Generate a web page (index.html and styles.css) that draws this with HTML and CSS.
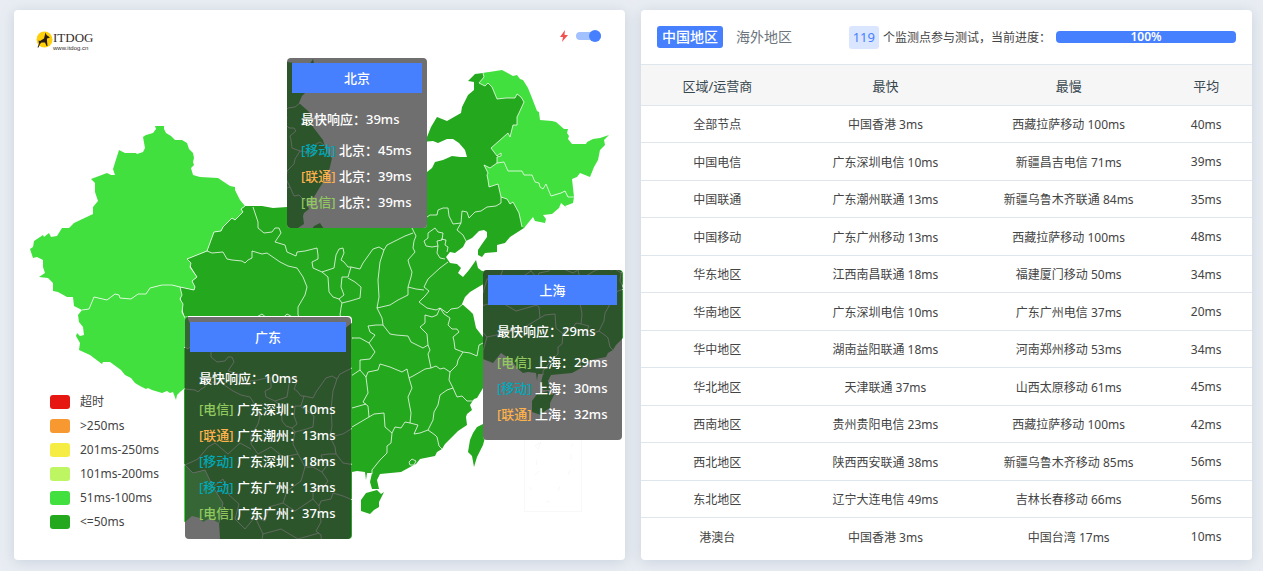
FILE: index.html
```html
<!DOCTYPE html>
<html lang="zh-CN">
<head>
    <meta charset="UTF-8">
    <meta name="viewport" content="width=device-width, initial-scale=1.0">
    <title>ITDOG</title>
    <link rel="stylesheet" href="styles.css">
</head>
<body>
    <main class="page">
        <section class="card map-card">
            <svg class="map" viewBox="14 10 611 550">
                <g id="china">
                    <!-- mainland -->
                    <path class="fast" d="M245 206L253 206L262 206L273 208L287 207L320 210L350 212L385 205L410 185L427 172L432 168L435 162L443 160L452 156L460 157L467 157L465 150L459 143L453 139L447 139L438 143L433 141L422 142L427 137L431 127L437 117L447 121L461 113L462 107L468 95L474 90L474 82L468 81L475 74L483 73L502 72L526 90L538 122L560 150L560 185L545 205L530 214L524 228L510 237L505 243L497 245L497 252L485 253L482 257L478 255L478 250L482 244L487 237L487 232L484 230L479 231L472 238L466 241L463 247L455 253L450 252L446 257L450 263L457 264L461 268L458 273L463 277L469 270L474 263L476 260L478 268L482 271L495 272L497 278L487 282L480 286L470 292L465 297L462 304L470 311L473 314L476 328L486 341L490 354L495 359L493 368L490 378L483 388L477 398L474 399L470 405L472 410L467 414L466 417L467 425L458 431L445 444L442 449L437 452L435 456L420 459L416 464L412 466L401 472L380 474L377 480L379 489L372 489L370 482L372 473L367 473L366 480L365 472L357 471L352 472L347 468L340 459L330 452L322 462L312 458L300 462L290 470L280 460L268 445L262 425L267 409L266 394L270 374L260 358L252 341L240 344L232 336L210 330L195 325L185 318L183 312L181 303L180 287L194 290L195 287L192 281L197 277L191 267L187 259L207 251L214 232L221 231L223 227L232 218L235 220L243 212L241 209Z"/>
                    <!-- Hainan, Taiwan -->
                    <path class="fast" d="M377 490L381 494L384 492L379 502L379 507L374 510L370 514L361 511L361 500L366 493Z"/>
                    <path class="fast" d="M483 424L477 427L473 433L470 440L468 452L472 456L474 467L477 457L483 445L487 430Z"/>
                    <!-- Xinjiang -->
                    <path class="mid" d="M91 179L107 173L111 175L115 175L113 169L119 150L125 153L136 153L137 154L143 152L145 148L143 137L146 135L153 133L156 129L155 126L164 126L164 129L166 133L171 136L175 140L182 140L187 143L189 149L193 153L194 158L193 162L194 165L191 168L193 175L200 177L218 178L230 186L235 187L235 190L240 200L245 206L241 209L243 212L235 220L232 218L223 227L221 231L214 232L207 251L187 259L191 263L190 267L197 277L192 281L195 287L194 290L180 287L172 285L162 285L150 288L146 294L138 294L131 299L120 298L119 295L115 294L107 300L94 297L89 309L82 310L74 306L73 297L67 297L58 292L53 291L53 283L48 278L39 277L45 273L43 267L43 260L37 257L33 258L30 249L33 247L34 241L43 235L44 237L49 233L51 237L57 236L62 228L69 228L74 223L93 214L93 207L98 201L95 192L95 183Z"/>
                    <!-- Tibet -->
                    <path class="mid" d="M82 310L78 315L79 322L83 327L84 335L80 336L77 333L76 336L80 343L79 350L90 355L102 364L103 362L110 362L121 370L125 375L131 378L135 383L140 386L146 389L148 388L152 390L162 393L167 391L170 393L173 392L176 400L177 395L180 392L185 388L205 385L232 393L239 387L247 389L250 393L257 389L266 394L270 374L260 358L252 341L240 344L232 336L210 330L195 325L185 318L182 312L183 304L180 299L182 295L180 287L172 285L162 285L150 288L146 294L138 294L131 299L120 298L119 295L115 294L107 300L94 297L89 309Z"/>
                    <!-- Heilongjiang -->
                    <path class="mid" d="M483 73L502 70L513 76L517 75L520 79L523 80L528 88L532 98L537 111L539 112L540 120L552 121L556 122L564 129L568 129L567 133L569 136L568 139L572 144L586 144L587 142L593 139L600 138L609 135L604 140L605 145L600 150L598 160L594 167L590 177L580 173L577 177L572 179L574 197L568 197L565 191L561 193L551 196L546 184L543 189L540 187L539 183L535 182L532 175L524 175L522 171L508 171L504 162L497 163L497 157L501 156L501 153L497 156L491 148L508 133L510 137L513 125L517 125L517 117L519 113L524 102L521 97L517 94L515 98L506 98L497 99L492 87L488 83L485 86L479 83L484 77Z"/>
                    <!-- Jilin -->
                    <path class="mid" d="M497 163L504 162L508 171L522 171L524 175L532 175L535 182L539 183L540 187L543 189L546 184L551 196L561 193L565 191L568 197L574 197L573 203L565 206L568 209L561 203L559 208L552 214L543 215L546 219L545 223L535 221L533 217L524 228L522 227L519 213L513 202L510 204L507 199L501 197L498 184L489 187L488 180L487 175L488 173L484 165L490 168Z"/>
                    <!-- province borders -->
                    <g class="border">
                        <path d="M245 206L241 209L243 212L235 220L232 218L223 227L221 231L214 232L207 251L187 259L191 263L190 267L197 277L192 281L195 287L194 290L180 287L172 285L162 285L150 288L146 294L138 294L131 299L120 298L119 295L115 294L107 300L94 297L89 309L82 310"/>
                        <path d="M180 287L182 295L180 299L183 304L182 312L185 318L195 325L210 330L232 336L240 344L252 341L260 358L270 374L266 394"/>
                        <path d="M483 73L484 77L479 83L485 86L488 83L492 87L497 99L506 98L515 98L517 94L521 97L524 102L519 113L517 117L517 125L513 125L510 137L508 133L491 148L497 156L501 153L501 156L497 157L497 163L504 162L508 171L522 171L524 175L532 175L535 182L539 183L540 187L543 189L546 184L551 196L561 193L565 191L568 197L574 197"/>
                        <path d="M497 163L490 168L484 165L488 173L487 175L488 180L489 187L498 184L501 197L507 199L510 204L513 202L519 213L522 227"/>
                        <path d="M501 197L501 203L496 206L487 207L481 211L475 212L469 218L467 212L462 211L461 223L457 230L463 235L466 241M461 223L453 224L449 216L448 208L443 208L438 210L437 215L430 215L427 217L412 228L416 236L414 241L413 248L415 252L408 260L409 264L412 272L411 277L408 287L408 295L398 300L390 305L377 308L379 297L378 280L380 262L384 250L387 245L393 242L397 240L405 236L413 233"/>
                        <path d="M435 228L438 232L443 233L442 240L437 241L438 246L432 247L426 246L424 241L428 238L428 233ZM441 239L446 240L445 245L448 247L447 252M438 246L437 253L440 258L445 259"/>
                        <path d="M448 262L440 268L428 279L424 287L429 291L425 296L419 302L427 308L436 310L440 308L447 313L451 309L458 308L463 304M424 290L416 289L408 287M440 308L437 315L432 317L425 315L425 323L420 327L427 334L428 345L423 348L411 342L408 336L396 335L390 334L383 325L382 318L377 308"/>
                        <path d="M384 250L379 247L373 249L363 263L360 269L351 267L348 277L342 277L341 287L344 295L339 299L333 297L329 292L328 277L322 272L313 268L312 262L318 259L318 255L317 248L305 251L297 252L296 256L287 252L285 245L275 242L281 233L279 228L275 228L272 232L264 233L258 228L258 222L253 207"/>
                        <path d="M322 272L334 268L336 255L339 249L343 248L344 253L341 260L344 262L348 267L351 267M348 278L355 282L361 287L360 298L350 301L342 303L339 299M342 303L341 308L340 315L345 325L352 338L360 338L369 343M345 325L330 328L318 318L305 325L298 315L298 307L305 295L307 287L303 277L297 268L288 266L280 262L267 253L262 254L252 251L252 258L248 260L245 263L242 261L232 260L227 259L223 252L212 253L207 251"/>
                        <path d="M232 336L245 330L255 318L262 314L275 325L287 314L298 320M260 358L270 350L276 366L286 375L282 390L292 400L302 388L312 392L316 378L330 374L334 362L348 352L352 338M302 388L310 405L328 400L345 410L366 404M310 405L306 425L316 436L335 432L352 427L369 417M316 436L312 450L312 458M330 374L342 382L354 374L360 370"/>
                        <path d="M383 325L376 325L368 326L370 332L375 335L369 343L375 352L370 359L360 360L360 370L366 377L368 372L378 370L380 364L390 367L402 372L407 369L409 378L413 376L420 372L425 369L431 368L428 354L430 350L428 345"/>
                        <path d="M431 368L436 366L440 369L444 368L450 372L457 365L458 360L463 352L455 349L454 341L453 337L459 332L457 329L452 329L448 325L450 318L444 314L440 308M463 352L470 353L477 356L479 345L483 343L487 346"/>
                        <path d="M450 372L449 380L453 388L457 397L462 396L467 401L473 401M453 388L447 390L440 395L438 405L434 412L433 420L428 430L420 433L414 434L418 425L410 423L411 413L408 397L412 388L409 378"/>
                        <path d="M366 377L368 393L363 402L368 406L369 417L374 414L384 413L385 427L392 433L395 427L401 428L405 422L410 423M392 433L391 443L387 446L387 453L380 460L372 470L372 474M428 430L435 435L437 437L439 446L442 449M409 462L412 459L416 461L414 465L410 465Z"/>
                    </g>
                </g>
                <g class="islands">
                    <rect x="524.5" y="430.5" width="57" height="81"/>
                    <path d="M535 446L541 442L538 449ZM536 460l1 5M571 454v6M571 447l2-3M539 471l-4 4M570 470l-2 5M530 487l1 3M560 486l-2 5M546 502l4-1"/>
                </g>
            </svg>

            <a class="logo" href="#">
                <svg width="17" height="17" viewBox="0 0 17 17">
                    <circle cx="8.500" cy="8.500" r="8" fill="#fdd00b"/>
                    <path d="M9.500 1.500L10.500 4L14 6.500L11 7.500V10L11.500 15H10.500L9 11.500H5.500L4 13L2.500 16.500L1.500 16.500L3 12.500L2.500 9.500L4 10L8 7.500Z" fill="#2a1d10"/>
                </svg>
                <span class="logo-text">
                    <span class="logo-name">ITDOG</span>
                    <span class="logo-url">www.itdog.cn</span>
                </span>
            </a>

            <label class="speed">
                <svg width="8" height="12" viewBox="0 0 8 12"><path d="M5 0L0 7H3L2 12L8 5H4.500Z" fill="#f2524f"/></svg>
                <input class="switch" type="checkbox" aria-label="快速" checked>
            </label>

            <ul class="legend">
                <li><i class="swatch timeout"></i>超时</li>
                <li><i class="swatch over250"></i>&gt;250ms</li>
                <li><i class="swatch to250"></i>201ms-250ms</li>
                <li><i class="swatch to200"></i>101ms-200ms</li>
                <li><i class="swatch to100"></i>51ms-100ms</li>
                <li><i class="swatch to50"></i>&lt;=50ms</li>
            </ul>

            <div class="tooltip beijing">
                <svg class="backdrop" viewBox="450 259 140 170" preserveAspectRatio="xMinYMin slice"><use href="#china"/></svg>
                <div class="tooltip-body">
                    <h3>北京</h3>
                    <p class="best">最快响应：39ms</p>
                    <p><span class="cmcc">[移动]</span> 北京：45ms</p>
                    <p><span class="unicom">[联通]</span> 北京：39ms</p>
                    <p><span class="telecom">[电信]</span> 北京：39ms</p>
                </div>
            </div>

            <div class="tooltip shanghai">
                <svg class="backdrop" viewBox="312 369 140 170" preserveAspectRatio="xMinYMin slice"><use href="#china"/></svg>
                <div class="tooltip-body">
                    <h3>上海</h3>
                    <p class="best">最快响应：29ms</p>
                    <p><span class="telecom">[电信]</span> 上海：29ms</p>
                    <p><span class="cmcc">[移动]</span> 上海：30ms</p>
                    <p><span class="unicom">[联通]</span> 上海：32ms</p>
                </div>
            </div>

            <div class="tooltip guangdong">
                <svg class="backdrop" viewBox="231 187 168 223" preserveAspectRatio="xMinYMin slice"><use href="#china"/></svg>
                <div class="tooltip-body">
                    <h3>广东</h3>
                    <p class="best">最快响应：10ms</p>
                    <p><span class="telecom">[电信]</span> 广东深圳：10ms</p>
                    <p><span class="unicom">[联通]</span> 广东潮州：13ms</p>
                    <p><span class="cmcc">[移动]</span> 广东深圳：18ms</p>
                    <p><span class="cmcc">[移动]</span> 广东广州：13ms</p>
                    <p><span class="telecom">[电信]</span> 广东广州：37ms</p>
                </div>
            </div>
        </section>

        <section class="card">
            <header class="toolbar">
                <div class="tabs">
                    <button class="tab active" type="button">中国地区</button>
                    <button class="tab" type="button">海外地区</button>
                </div>
                <div class="status">
                    <span class="badge">119</span>
                    <span class="status-text">个监测点参与测试，当前进度：</span>
                    <div class="progress"><div class="bar" style="width: 100%">100%</div></div>
                </div>
            </header>
            <table class="result">
                <thead>
                    <tr><th>区域/运营商</th><th>最快</th><th>最慢</th><th>平均</th></tr>
                </thead>
                <tbody>
                    <tr><td>全部节点</td><td>中国香港 3ms</td><td>西藏拉萨移动 100ms</td><td>40ms</td></tr>
                    <tr><td>中国电信</td><td>广东深圳电信 10ms</td><td>新疆昌吉电信 71ms</td><td>39ms</td></tr>
                    <tr><td>中国联通</td><td>广东潮州联通 13ms</td><td>新疆乌鲁木齐联通 84ms</td><td>35ms</td></tr>
                    <tr><td>中国移动</td><td>广东广州移动 13ms</td><td>西藏拉萨移动 100ms</td><td>48ms</td></tr>
                    <tr><td>华东地区</td><td>江西南昌联通 18ms</td><td>福建厦门移动 50ms</td><td>34ms</td></tr>
                    <tr><td>华南地区</td><td>广东深圳电信 10ms</td><td>广东广州电信 37ms</td><td>20ms</td></tr>
                    <tr><td>华中地区</td><td>湖南益阳联通 18ms</td><td>河南郑州移动 53ms</td><td>34ms</td></tr>
                    <tr><td>华北地区</td><td>天津联通 37ms</td><td>山西太原移动 61ms</td><td>45ms</td></tr>
                    <tr><td>西南地区</td><td>贵州贵阳电信 23ms</td><td>西藏拉萨移动 100ms</td><td>42ms</td></tr>
                    <tr><td>西北地区</td><td>陕西西安联通 38ms</td><td>新疆乌鲁木齐移动 85ms</td><td>56ms</td></tr>
                    <tr><td>东北地区</td><td>辽宁大连电信 49ms</td><td>吉林长春移动 66ms</td><td>56ms</td></tr>
                    <tr><td>港澳台</td><td>中国香港 3ms</td><td>中国台湾 17ms</td><td>10ms</td></tr>
                </tbody>
            </table>
        </section>
    </main>
</body>
</html>
```
FILE: styles.css
```css
* {
    box-sizing: border-box;
}

body {
    margin: 0;
    background-color: #e9edf3;
    font-family: "Noto Sans", "Noto Sans CJK SC", sans-serif;
    font-size: 12px;
    color: #444;
}

.page {
    display: flex;
    align-items: stretch;
    gap: 16px;
    padding: 10px 11px 11px 14px;
}

.card {
    flex: 1;
    min-width: 0;
    background-color: #fff;
    border-radius: 4px;
    box-shadow: 0 2px 14px rgba(110, 130, 160, 0.25);
}

/* map */
.map-card {
    position: relative;
}

.map {
    display: block;
    width: 100%;
}

.fast {
    fill: #24a91e;
}

.mid {
    fill: #42e03e;
}

.border {
    fill: none;
    stroke: rgba(255, 255, 255, 0.75);
    stroke-width: 1;
    stroke-linejoin: round;
}

.islands {
    fill: none;
    stroke: #f8f8f8;
}

.logo {
    position: absolute;
    top: 21px;
    left: 22px;
    display: flex;
    color: #332c2b;
    text-decoration: none;
}

.logo-text {
    display: flex;
    flex-direction: column;
}

.logo-name {
    font-family: "Liberation Serif", serif;
    font-size: 13px;
    line-height: 14px;
}

.logo-url {
    font-family: "Liberation Sans", sans-serif;
    font-size: 6px;
    line-height: 6px;
}

.speed {
    position: absolute;
    top: 20px;
    right: 24px;
    display: flex;
    align-items: center;
    gap: 8px;
}

.switch {
    appearance: none;
    display: flex;
    align-items: center;
    justify-content: flex-end;
    width: 25px;
    height: 8px;
    margin: 0;
    border-radius: 4px;
    background-color: #a3c0ff;
}

.switch::before {
    content: "";
    width: 12px;
    height: 12px;
    flex: none;
    border-radius: 50%;
    background-color: #4680ff;
}

.legend {
    position: absolute;
    left: 36px;
    bottom: 26px;
    margin: 0;
    padding: 0;
    list-style: none;
}

.legend li {
    display: flex;
    align-items: center;
    gap: 10px;
    height: 24px;
    line-height: 24px;
}

.swatch {
    width: 20px;
    height: 14px;
    border-radius: 3px;
}

.timeout { background-color: #e61610; }
.over250 { background-color: #f79831; }
.to250 { background-color: #f6ed44; }
.to200 { background-color: #bef663; }
.to100 { background-color: #42e03e; }
.to50 { background-color: #24a91e; }

/* tooltips */
.tooltip {
    position: absolute;
    color: #fff;
    font-size: 13px;
    font-weight: 500;
    line-height: 26px;
    white-space: nowrap;
}

.beijing {
    left: 273px;
    top: 48px;
    width: 140px;
}

.shanghai {
    left: 469px;
    top: 260px;
    width: 139px;
}

.guangdong {
    left: 171px;
    top: 307px;
    width: 166px;
}

.backdrop {
    position: absolute;
    top: 0;
    left: 0;
    width: 100%;
    height: 100%;
    border-radius: 4px;
    background-color: #fff;
}

.shanghai .backdrop {
    width: calc(100% + 1px);
}

.guangdong .backdrop {
    top: -1px;
    left: -1px;
    width: calc(100% + 2px);
    height: calc(100% + 1px);
}

.tooltip-body {
    position: relative;
    padding: 5px 5px 13px;
    border-radius: 4px;
    background-color: rgba(50, 50, 50, 0.7);
}

.tooltip h3 {
    margin: 0 0 13px;
    background-color: #4680ff;
    font-size: 13px;
    font-weight: 500;
    line-height: 30px;
    text-align: center;
}

.tooltip p {
    margin: 0 0 0 9px;
}

.tooltip .best {
    margin-bottom: 5px;
}

.telecom { color: #91c95f; }
.unicom { color: #fdb14b; }
.cmcc { color: #00a8b8; }

/* results */
.toolbar {
    display: flex;
    align-items: center;
    justify-content: space-between;
    height: 54px;
    padding: 0 16px;
}

.tabs {
    display: flex;
    gap: 8px;
}

.tab {
    height: 22px;
    padding: 0 5px;
    border: none;
    border-radius: 3px;
    background: none;
    font-family: inherit;
    font-size: 14px;
    line-height: 22px;
    color: #6c757d;
    cursor: pointer;
}

.active {
    background-color: #4680ff;
    color: #fff;
    font-weight: 500;
}

.status {
    display: flex;
    align-items: center;
    white-space: nowrap;
}

.badge {
    padding: 0 4px;
    border-radius: 3px;
    background-color: #dae6ff;
    color: #4680ff;
    font-size: 13px;
    line-height: 23px;
}

.status-text {
    margin: 0 5px 0 4px;
}

.progress {
    width: 180px;
    height: 12px;
    border-radius: 4px;
    background-color: #e9ecef;
}

.bar {
    height: 12px;
    border-radius: 4px;
    background-color: #4680ff;
    color: #fff;
    font-weight: 600;
    line-height: 12px;
    text-align: center;
}

.result {
    width: 100%;
    border-collapse: collapse;
    table-layout: fixed;
    text-align: center;
}

.result th,
.result td {
    padding: 0;
    border-top: 1px solid #dfe6ee;
}

.result th {
    width: 30%;
    height: 41px;
    background-color: #f6f6f6;
    color: #37474f;
    font-size: 13px;
    font-weight: 400;
}

.result th:first-child {
    width: 25%;
}

.result th:last-child {
    width: 15%;
}

.result td {
    height: 37px;
}

.result tr:nth-child(even) td {
    height: 38px;
}
```
